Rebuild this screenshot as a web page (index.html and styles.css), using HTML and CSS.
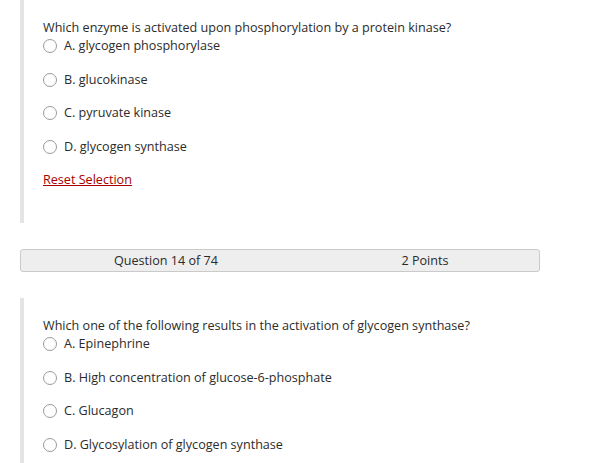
FILE: index.html
```html
<!DOCTYPE html>
<html>
<head>
<meta charset="utf-8">
<link rel="stylesheet" href="styles.css">
</head>
<body>
<div class="page">
  <section class="question first">
    <p class="prompt">Which enzyme is activated upon phosphorylation by a protein kinase?</p>
    <ul class="options">
      <li class="option"><span class="radio"></span><span>A. glycogen phosphorylase</span></li>
      <li class="option"><span class="radio"></span><span>B. glucokinase</span></li>
      <li class="option"><span class="radio"></span><span>C. pyruvate kinase</span></li>
      <li class="option"><span class="radio"></span><span>D. glycogen synthase</span></li>
    </ul>
    <a class="reset" href="#">Reset Selection</a>
  </section>

  <div class="qheader">
    <span class="qnum">Question 14 of 74</span>
    <span class="qpts">2 Points</span>
  </div>

  <section class="question second">
    <p class="prompt">Which one of the following results in the activation of glycogen synthase?</p>
    <ul class="options">
      <li class="option"><span class="radio"></span><span>A. Epinephrine</span></li>
      <li class="option"><span class="radio"></span><span>B. High concentration of glucose-6-phosphate</span></li>
      <li class="option"><span class="radio"></span><span>C. Glucagon</span></li>
      <li class="option"><span class="radio"></span><span>D. Glycosylation of glycogen synthase</span></li>
    </ul>
  </section>
</div>
</body>
</html>
```

FILE: styles.css
```css
html, body {
  margin: 0;
  padding: 0;
  background: #ffffff;
}

body {
  font-family: "Open Sans", "Liberation Sans", sans-serif;
  font-size: 12.6px;
  color: #2b2b2b;
  height: 463px;
  overflow: hidden;
}

.page {
  display: flex;
  flex-direction: column;
}

.question {
  margin-left: 20px;
  border-left: 4px solid #e4e4e4;
  padding-left: 19px;
  display: flex;
  flex-direction: column;
  align-items: flex-start;
}

.question.first {
  padding-top: 19px;
  padding-bottom: 34px;
}

.question.second {
  margin-top: 26px;
  padding-top: 19px;
  padding-bottom: 20px;
}

.prompt {
  margin: 0;
  line-height: 18px;
}

.options {
  list-style: none;
  margin: 0;
  padding: 0;
  display: flex;
  flex-direction: column;
  gap: 15.7px;
}

.option {
  display: flex;
  align-items: center;
  height: 18px;
  line-height: 18px;
}

.radio {
  width: 12px;
  height: 12px;
  border: 1px solid #9a9a9a;
  border-radius: 50%;
  background: #fff;
  margin-right: 7px;
  flex: none;
}

.reset {
  margin-top: 15px;
  line-height: 18px;
  color: #a60000;
  text-decoration: underline;
}

.qheader {
  margin-top: 26px;
  margin-left: 20px;
  width: 518px;
  height: 21px;
  border: 1px solid #cacaca;
  border-radius: 3px;
  background: #eeeeee;
  display: grid;
  grid-template-columns: 290px 228px;
  align-items: center;
  line-height: 21px;
  color: #2b2b2b;
}

.qnum, .qpts {
  text-align: center;
}
```
